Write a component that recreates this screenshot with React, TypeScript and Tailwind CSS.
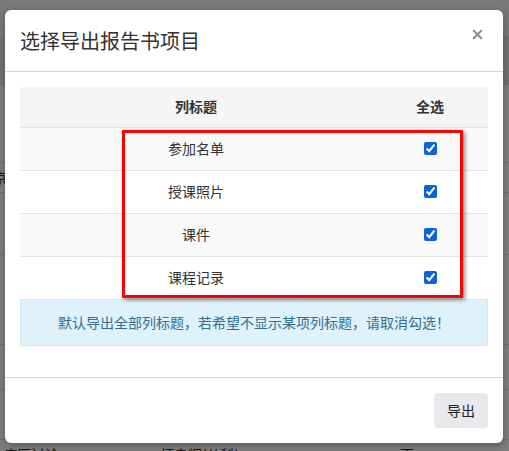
import { X } from 'lucide-react'

interface ColumnItem {
  title: string
  checked: boolean
}

const columns: ColumnItem[] = [
  { title: '参加名单', checked: true },
  { title: '授课照片', checked: true },
  { title: '课件', checked: true },
  { title: '课程记录', checked: true },
]

export default function App() {
  return (
    <div
      className="relative w-[509px] h-[451px] overflow-hidden bg-white"
      style={{ fontFamily: '"Noto Sans CJK SC", "Liberation Sans", sans-serif' }}
    >
      {/* Page underneath the dialog */}
      <div className="flex flex-col text-[14px] text-[#333]">
        <div className="h-[38px] bg-[#f2f2f2] border-b border-[#ddd]" />
        <div className="h-[47px] bg-[#e6e6e6] border-b border-[#ddd]" />
        <div className="h-[78px] border-b border-[#ddd]" />
        <div className="h-[30px] flex items-center border-b border-[#ddd]">
          <span className="-ml-[7px]">京</span>
        </div>
        <div className="h-[62px] border-b border-[#ddd]" />
        <div className="h-[90px] border-b border-[#ddd]" />
        <div className="h-[45px] border-b border-[#ddd]" />
        <div className="h-[50px] border-b border-[#ddd]" />
        <div className="h-[40px] flex items-start pt-[4px]">
          <span className="ml-[3px] w-[157px]">病历讨论</span>
          <span className="w-[240px]">杯良辉(儿科)</span>
          <span>否</span>
        </div>
      </div>

      {/* Backdrop */}
      <div className="absolute inset-0 bg-black/50" />

      {/* Dialog */}
      <div className="absolute left-[5px] top-[10px] w-[498px] bg-white rounded-[6px] shadow-[0_3px_9px_rgba(0,0,0,0.3)] flex flex-col">
        <div className="h-[62px] flex items-center justify-between pl-[15px] pr-[18px] border-b border-[#c9dbe0]">
          <h4 className="text-[20px] text-[#333] leading-none">选择导出报告书项目</h4>
          <X className="w-[15px] h-[15px] text-[#8f8f8f] -mt-[12px]" strokeWidth={3.4} />
        </div>

        <div className="relative px-[15px] pt-[15px] pb-[31px]">
          <table className="w-full border-collapse text-[14px] text-[#333]">
            <thead>
              <tr className="h-[40px] bg-[#f5f5f5]">
                <th className="w-[352px] font-bold text-center">列标题</th>
                <th className="font-bold text-center">全选</th>
              </tr>
            </thead>
            <tbody>
              {columns.map((col, i) => (
                <tr
                  key={col.title}
                  className={`h-[43px] border-t border-[#e3e3e3] ${i % 2 === 0 ? 'bg-[#f9f9f9]' : 'bg-white'}`}
                >
                  <td className="text-center">{col.title}</td>
                  <td>
                    <div className="flex justify-center">
                      <input
                        type="checkbox"
                        checked={col.checked}
                        readOnly
                        className="block w-[13px] h-[13px] m-0 accent-[#0b63d9]"
                      />
                    </div>
                  </td>
                </tr>
              ))}
            </tbody>
          </table>

          <div className="h-[47px] flex items-center justify-center bg-[#dff1fa] border border-[#cde8f3] text-[14px] text-[#31708f]">
            默认导出全部列标题，若希望不显示某项列标题，请取消勾选！
          </div>

          {/* Highlight frame drawn over the rows */}
          <div className="absolute left-[117px] top-[58px] w-[341px] h-[168px] border-[3px] border-[#ff0000] shadow-[2px_2px_4px_rgba(0,0,0,0.45)] pointer-events-none" />
        </div>

        <div className="flex justify-end p-[15px] border-t border-[#d5d5d5]">
          <button className="w-[54px] h-[35px] rounded-[4px] bg-[#e8e8ed] text-[14px] text-[#222]">导出</button>
        </div>
      </div>
    </div>
  )
}
